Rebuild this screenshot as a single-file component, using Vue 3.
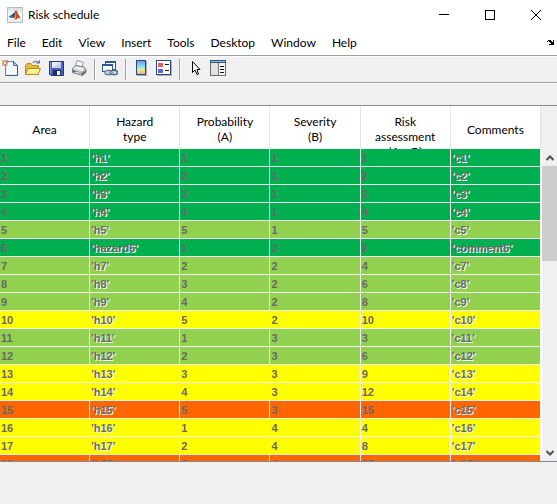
<script setup>
const menus = ['File', 'Edit', 'View', 'Insert', 'Tools', 'Desktop', 'Window', 'Help']

const columns = [
  ['Area'],
  ['Hazard', 'type'],
  ['Probability', '(A)'],
  ['Severity', '(B)'],
  ['Risk', 'assessment', '(A x B)'],
  ['Comments'],
]

const levels = {
  1: 'low', 2: 'low', 3: 'low', 4: 'low', 6: 'low',
  5: 'minor', 7: 'minor', 8: 'minor', 9: 'minor', 11: 'minor', 12: 'minor',
  10: 'medium', 13: 'medium', 14: 'medium', 16: 'medium', 17: 'medium',
  15: 'high', 18: 'high',
}

const rows = Array.from({ length: 18 }, (_, i) => {
  const area = i + 1
  const probability = (i % 5) + 1
  const severity = Math.floor(i / 5) + 1
  return {
    area,
    hazard: area === 6 ? "'hazard6'" : `'h${area}'`,
    probability,
    severity,
    risk: probability * severity,
    comment: area === 6 ? "'comment6'" : `'c${area}'`,
    level: levels[area],
  }
})
</script>

<template>
  <div class="window">
    <header class="titlebar">
      <svg class="app-icon" width="16" height="16" viewBox="0 0 16 16" aria-hidden="true">
        <defs>
          <linearGradient id="tile" x1="0" y1="0" x2="0" y2="1">
            <stop offset="0" stop-color="#cfdde6" /><stop offset=".5" stop-color="#fff" /><stop offset="1" stop-color="#dfe6eb" />
          </linearGradient>
        </defs>
        <rect x=".5" y=".5" width="15" height="15" fill="url(#tile)" stroke="#b4c0c8" />
        <path d="M1.500 9.500 5 7.500 7 8.500 5.500 11 4 11Z" fill="#3277a8" />
        <path d="M5 7.500 7 6 9 3 8.500 8 6 11Z" fill="#234b74" />
        <path d="M9 3C10.500 4.500 11.500 9 14 11.500 12 10.500 10.500 10.500 8.500 13 8 11.500 7 11 5.500 11 7.500 9 8 6 9 3Z" fill="#bd4322" />
        <path d="M9 4C9.500 7 9.500 10 8.500 12.500 8 11.500 7.500 11 7 10.500 8.500 8.500 8.500 6 9 4Z" fill="#ef9a38" />
      </svg>
      <h1>Risk schedule</h1>
      <div class="window-controls">
        <button type="button" aria-label="Minimize">
          <svg width="10" height="11" viewBox="0 0 10 11"><path d="M0 5.500H10" stroke="#000" /></svg>
        </button>
        <button type="button" aria-label="Maximize">
          <svg width="10" height="10" viewBox="0 0 10 10"><rect x=".5" y=".5" width="9" height="9" fill="none" stroke="#000" /></svg>
        </button>
        <button type="button" aria-label="Close">
          <svg width="10" height="10" viewBox="0 0 10 10"><path d="M0 0 10 10M10 0 0 10" stroke="#000" /></svg>
        </button>
      </div>
    </header>

    <nav class="menubar">
      <button v-for="m in menus" :key="m" type="button">{{ m }}</button>
      <button class="dock" type="button" aria-label="Dock">
        <svg width="7" height="5" viewBox="0 0 7 5" shape-rendering="crispEdges"><path d="M1 0H4V1H5V2H6V0H7V5H2V4H4V3H3V2H2V1H1V2H0V1H1Z" fill="#000" /></svg>
      </button>
    </nav>

    <div class="toolbar" role="toolbar">
      <button type="button" aria-label="New">
        <svg width="16" height="16" viewBox="0 0 16 16">
          <path d="M3.500 1.500H11.500L15.500 5.500V15.500H3.500Z" fill="#e9f1ff" stroke="#6b83b5" />
          <path d="M5 3H11V6H14V14H5Z" fill="#f8fbff" />
          <path d="M11.500 1.500V5.500H15.500Z" fill="#b9cdf0" stroke="#4d6aa6" />
          <path d="M3.500 15.500H15.500V6" fill="none" stroke="#3e578f" />
          <path d="M0 0 6 6M6 0 0 6M3 0V6M0 3H6" stroke="#d88a5c" />
          <circle cx="3" cy="3" r="2" fill="#fff0d8" stroke="#d2622f" />
        </svg>
      </button>
      <button type="button" aria-label="Open">
        <svg width="16" height="16" viewBox="0 0 16 16">
          <path d="M.5 14.500V5.500L2 3.500H6L7.500 5.500H13.500V14.500Z" fill="#e9b93c" stroke="#b98a1d" />
          <path d="M.5 14.500 3 8.500H15.500L13 14.500Z" fill="#fff08c" stroke="#b98a1d" />
          <path d="M3.500 9.500H14" stroke="#fffbd0" />
          <path d="M8 3C9 .8 12 .8 13 3" fill="none" stroke="#768ba5" stroke-width="1.400" />
          <path d="M10.500 3.500H15V0Z" fill="#667f9c" />
        </svg>
      </button>
      <button type="button" aria-label="Save">
        <svg width="16" height="16" viewBox="0 0 16 16">
          <path d="M1.500 1.500H15.500V15.500H3L1.500 14Z" fill="#4862bf" stroke="#26337f" />
          <path d="M2.500 2V13" stroke="#8ba1e8" />
          <path d="M4 2H13V8H4Z" fill="#e9edfb" />
          <path d="M4 8 13 2V8Z" fill="#c5cff0" />
          <path d="M5 10H13V15H5Z" fill="#242b62" />
          <path d="M9 11H12V15H9Z" fill="#f1f3fb" />
        </svg>
      </button>
      <button type="button" aria-label="Print">
        <svg width="16" height="16" viewBox="0 0 16 16">
          <path d="M4 7.500 6 .5 12.500 2.500 10.500 8Z" fill="#fbfcff" stroke="#8795a8" />
          <path d="M1.500 8.500 4.500 5.500 13 7 15 9.500V12.500L11.500 15.500 1.500 12.500Z" fill="#c4c7cc" stroke="#777b83" />
          <path d="M2 8.500 5 6.500 13 8 11.500 11Z" fill="#eff0f2" />
          <path d="M2 11 11.500 14 14.500 11" fill="none" stroke="#555963" stroke-width="1.500" />
          <path d="M4 12 10 13.500" stroke="#fff" />
          <path d="M12 11.500H14" stroke="#6abc5a" />
        </svg>
      </button>
      <span class="separator"></span>
      <button type="button" aria-label="Link plot">
        <svg width="16" height="16" viewBox="0 0 16 16">
          <rect x="3.500" y="1.500" width="10" height="8" fill="#f7faff" stroke="#31578f" />
          <path d="M3 2H14" stroke="#31578f" stroke-width="2" />
          <rect x=".5" y="4.500" width="10" height="7" fill="#fff" stroke="#31578f" />
          <path d="M0 5H11" stroke="#31578f" stroke-width="2" />
          <rect x="3" y="10.500" width="7" height="4" rx="2" fill="#dce5ed" stroke="#667f96" stroke-width="1.400" />
          <rect x="8.500" y="10.500" width="7" height="4" rx="2" fill="#dce5ed" stroke="#506981" stroke-width="1.400" />
          <path d="M6 12.500H12" stroke="#93a9bb" stroke-width="1.500" />
        </svg>
      </button>
      <span class="separator"></span>
      <button type="button" aria-label="Insert colorbar">
        <svg width="16" height="16" viewBox="0 0 16 16">
          <defs>
            <linearGradient id="spectrum" x1="0" y1="0" x2="0" y2="1">
              <stop offset="0" stop-color="#7a8df0" /><stop offset=".35" stop-color="#74d8ee" />
              <stop offset=".65" stop-color="#dcf3a0" /><stop offset="1" stop-color="#f3a37c" />
            </linearGradient>
          </defs>
          <path d="M4 1H14V16H4Z" fill="#aab0bd" />
          <rect x="3.500" y=".5" width="9" height="14" fill="url(#spectrum)" stroke="#2b477f" />
        </svg>
      </button>
      <button type="button" aria-label="Insert legend">
        <svg width="16" height="16" viewBox="0 0 16 16">
          <path d="M1 1H16V16H1Z" fill="#aab0bd" />
          <rect x=".5" y=".5" width="14" height="14" fill="#fff" stroke="#2b477f" />
          <path d="M2 3H7V7H2Z" fill="#e45b5b" />
          <path d="M2 9H7V13H2Z" fill="#625fe0" />
          <path d="M9 4.500H13M9 10.500H13" stroke="#111" />
        </svg>
      </button>
      <span class="separator"></span>
      <button type="button" aria-label="Edit plot">
        <svg width="16" height="16" viewBox="0 0 16 16">
          <path d="M5.500 1.500V12.500L8 10 10 14.500 11.500 14 10 9.500H13Z" fill="#fff" stroke="#000" />
        </svg>
      </button>
      <button type="button" aria-label="Property inspector">
        <svg width="16" height="16" viewBox="0 0 16 16">
          <rect x=".5" y=".5" width="15" height="15" fill="#f4f4f4" stroke="#6d6d6d" />
          <path d="M1 3H8V15H1Z" fill="#e2e2e2" />
          <path d="M0 0H16V3H0Z" fill="#2f5878" />
          <path d="M1 1H15V2H1Z" fill="#8dbfe4" />
          <path d="M8.500 3V15" stroke="#777" />
          <path d="M10 6.500H14M10 9.500H14M10 12.500H14" stroke="#111" />
        </svg>
      </button>
    </div>

    <div class="strip"></div>

    <main class="grid">
      <div class="viewport">
        <table>
          <colgroup>
            <col v-for="c in columns" :key="c[0]" />
          </colgroup>
          <thead>
            <tr>
              <th v-for="c in columns" :key="c[0]" scope="col">
                <div class="heading"><span v-for="line in c" :key="line">{{ line }}</span></div>
              </th>
            </tr>
          </thead>
          <tbody>
            <tr v-for="r in rows" :key="r.area" :class="r.level">
              <td>{{ r.area }}</td>
              <td class="text">{{ r.hazard }}</td>
              <td>{{ r.probability }}</td>
              <td>{{ r.severity }}</td>
              <td>{{ r.risk }}</td>
              <td class="text">{{ r.comment }}</td>
            </tr>
          </tbody>
        </table>
      </div>
      <div class="scrollbar">
        <button type="button" aria-label="Scroll up">
          <svg width="8" height="6" viewBox="0 0 8 6"><path d="M.5 5 4 1.500 7.500 5" fill="none" stroke="#505050" stroke-width="2" /></svg>
        </button>
        <div class="track"><div class="thumb"></div></div>
        <button type="button" aria-label="Scroll down">
          <svg width="8" height="6" viewBox="0 0 8 6"><path d="M.5 1 4 4.500 7.500 1" fill="none" stroke="#505050" stroke-width="2" /></svg>
        </button>
      </div>
    </main>
  </div>
</template>

<style>
body {
  margin: 0;
}
</style>

<style scoped>
.window {
  box-sizing: border-box;
  display: flex;
  flex-direction: column;
  height: 100vh;
  padding-bottom: 42px;
  background: #f0f0f0;
  color: #000;
  font: 12px/15px Lato, "Open Sans", sans-serif;
}
button {
  display: flex;
  align-items: center;
  justify-content: center;
  padding: 0;
  border: 0;
  background: none;
  color: inherit;
  font: inherit;
}
svg {
  display: block;
}
.titlebar {
  display: flex;
  align-items: center;
  height: 29px;
  padding-left: 7px;
  background: #fff;
}
h1 {
  margin: 0 0 0 5px;
  font: inherit;
}
.window-controls {
  display: flex;
  gap: 4px;
  margin-left: auto;
}
.window-controls button {
  width: 42px;
  height: 28px;
}
.menubar {
  display: flex;
  gap: 16px;
  height: 25px;
  padding: 1px 3px 0 7px;
  background: #fff;
}
.dock {
  margin-left: auto;
}
.toolbar {
  display: flex;
  gap: 7px;
  height: 20px;
  padding: 2px 2px 3px;
  border-top: 1px solid #a0a0a0;
  box-shadow: inset 0 1px #fff;
}
.toolbar button {
  width: 16px;
  height: 16px;
  margin-top: 2px;
}
.separator {
  width: 1px;
  height: 21px;
  margin-top: 1px;
  background: #a0a0a0;
  box-shadow: 1px 0 #fff;
}
.strip {
  height: 22px;
  margin-top: 1px;
  border-top: 1px solid #a0a0a0;
  box-shadow: inset 0 1px #fff;
}
.grid {
  display: flex;
  flex: 1;
  min-height: 0;
  border-top: 1px solid #828790;
  border-bottom: 1px solid #828790;
}
.viewport {
  flex: 1;
  overflow: hidden;
}
table {
  width: 100%;
  table-layout: fixed;
  border-spacing: 0;
}
th {
  padding: 0;
  border-right: 1px solid #e5e5e5;
  background: #fff;
  font-weight: 400;
}
.heading {
  box-sizing: border-box;
  display: grid;
  align-content: safe center;
  height: 43px;
  padding: 8px 0 5px;
  overflow: hidden;
}
td {
  padding: 2px 1px 0;
  border-right: 1px solid #f0f0f0;
  border-bottom: 1px solid #f0f0f0;
  color: #696969;
  font: bold 11px/15px "Liberation Sans", Arial, sans-serif;
}
.text {
  text-shadow: 1px 1px #fff;
}
.low td {
  background: #00b050;
}
.minor td {
  background: #92d050;
}
.medium td {
  background: #ff0;
}
.high td {
  background: #f60;
}
.scrollbar {
  display: flex;
  flex-direction: column;
  width: 15px;
  margin: 43px 0 0;
  border-left: 1px solid #fff;
}
.scrollbar button {
  height: 17px;
}
.track {
  flex: 1;
}
.thumb {
  height: 34%;
  background: #cdcdcd;
}
</style>
